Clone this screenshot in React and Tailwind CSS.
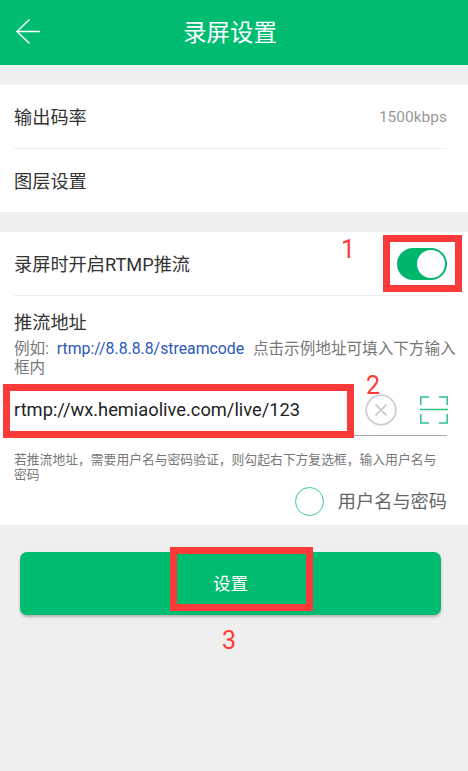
import React from 'react';

const cjk = { fontFamily: '"Roboto", "Noto Sans CJK SC", sans-serif' };

function BackArrow() {
    return (
        <svg width="26" height="26" viewBox="0 0 26 26" fill="none" stroke="#ffffff" strokeWidth="1.4">
            <path d="M25 13.5H2M14.5 1.5L2 13.5L14.5 25.5" />
        </svg>
    );
}

function ClearIcon() {
    return (
        <svg width="32" height="32" viewBox="0 0 32 32" fill="none" stroke="#cfcfcf" strokeWidth="1.8">
            <circle cx="16" cy="16" r="14.8" />
            <path d="M10.5 10.5L21.5 21.5M21.5 10.5L10.5 21.5" />
        </svg>
    );
}

function ScanIcon() {
    return (
        <svg width="28" height="28" viewBox="0 0 28 28" fill="none" stroke="#2cc285" strokeWidth="1.5">
            <path d="M0.8 9V1H9M19 1H27.2V9M0 13.5H28M0.8 18V27H9M19 27H27.2V18" />
        </svg>
    );
}

export default function App() {
    return (
        <div className="relative w-[468px] h-[771px] bg-[#efefef] overflow-hidden" style={cjk}>

            {/* Header */}
            <div className="relative h-[66px] bg-[#00bc71] border-b border-[#e6f7ef] pr-[8px] flex items-center justify-center">
                <div className="absolute left-[15px] top-[18px] flex">
                    <BackArrow />
                </div>
                <h1 className="text-[23.4px] text-white mt-[2px]">录屏设置</h1>
            </div>

            {/* Bitrate + layers */}
            <div className="mt-[19px] bg-white pl-[14px] pr-[21px]">
                <div className="h-[63px] flex items-center justify-between border-b border-[#eeeeee] box-content">
                    <span className="text-[18.2px] text-[#333333] mt-[3px]">输出码率</span>
                    <span className="text-[15.5px] text-[#999999] mt-[3px]">1500kbps</span>
                </div>
                <div className="h-[63px] flex items-center">
                    <span className="text-[18.2px] text-[#333333] mt-[3px]">图层设置</span>
                </div>
            </div>

            {/* RTMP */}
            <div className="mt-5 bg-white h-[293px] flex flex-col pl-[14px] pr-[21px]">
                <div className="h-[63px] flex items-center justify-between border-b border-[#eeeeee] box-content shrink-0">
                    <span className="text-[18.2px] text-[#333333] mt-[3px]">录屏时开启RTMP推流</span>
                    <div className="w-[50px] h-[32px] rounded-full bg-[#00b56c] flex items-center justify-end pr-[2px]">
                        <div className="w-[28px] h-[28px] rounded-full bg-white" />
                    </div>
                </div>
                <div className="text-[18.2px] text-[#333333] mt-[13px] leading-[27px]">推流地址</div>
                <p className="text-[15.6px] leading-[19px] text-[#777777] mt-[3px] -mr-[14px]">
                    例如: <span className="text-[15.8px] text-[#2b57b8] ml-[4px] mr-[5px]">rtmp://8.8.8.8/streamcode</span> 点击示例地址可填入下方输入框内
                </p>
                <div className="h-[50px] mt-[7px] -mr-[1px] flex items-center justify-between shrink-0">
                    <span className="text-[18.3px] text-[#222222]">rtmp://wx.hemiaolive.com/live/123</span>
                    <div className="flex items-center gap-[23px]">
                        <ClearIcon />
                        <ScanIcon />
                    </div>
                </div>
                <div className="h-px bg-[#aaaaaa] shrink-0" />
                <p className="text-[12.8px] leading-[15px] text-[#777777] mt-[16px]">
                    若推流地址，需要用户名与密码验证，则勾起右下方复选框，输入用户名与密码
                </p>
                <div className="flex items-center justify-end gap-[14px] mt-[5px]">
                    <div className="w-[29px] h-[29px] rounded-full border-[1.5px] border-[#3cc795]" />
                    <span className="text-[18.2px] text-[#666666]">用户名与密码</span>
                </div>
            </div>

            {/* Submit */}
            <div className="mt-[27px] ml-[20px] mr-[27px]">
                <button className="w-full h-[63px] rounded-[7px] bg-[#00bc71] text-white text-[17.6px] shadow-[0_2px_3px_rgba(0,0,0,0.25)] flex items-center justify-center pt-[2px]">
                    设置
                </button>
            </div>

            {/* Red annotations over the screenshot */}
            <div className="absolute left-[383px] top-[235px] w-[79px] h-[57px] border-[7px] border-[#fd3a3a]" />
            <div className="absolute left-[3px] top-[384px] w-[351px] h-[54px] border-[7px] border-[#fd3a3a]" />
            <div className="absolute left-[170px] top-[547px] w-[143px] h-[64px] border-[7px] border-[#fd3a3a]" />
            <span className="absolute left-[341px] top-[237px] text-[25px] leading-[25px] text-[#fd3a3a]">1</span>
            <span className="absolute left-[366px] top-[373px] text-[25px] leading-[25px] text-[#fd3a3a]">2</span>
            <span className="absolute left-[222px] top-[628px] text-[25px] leading-[25px] text-[#fd3a3a]">3</span>
        </div>
    );
}
